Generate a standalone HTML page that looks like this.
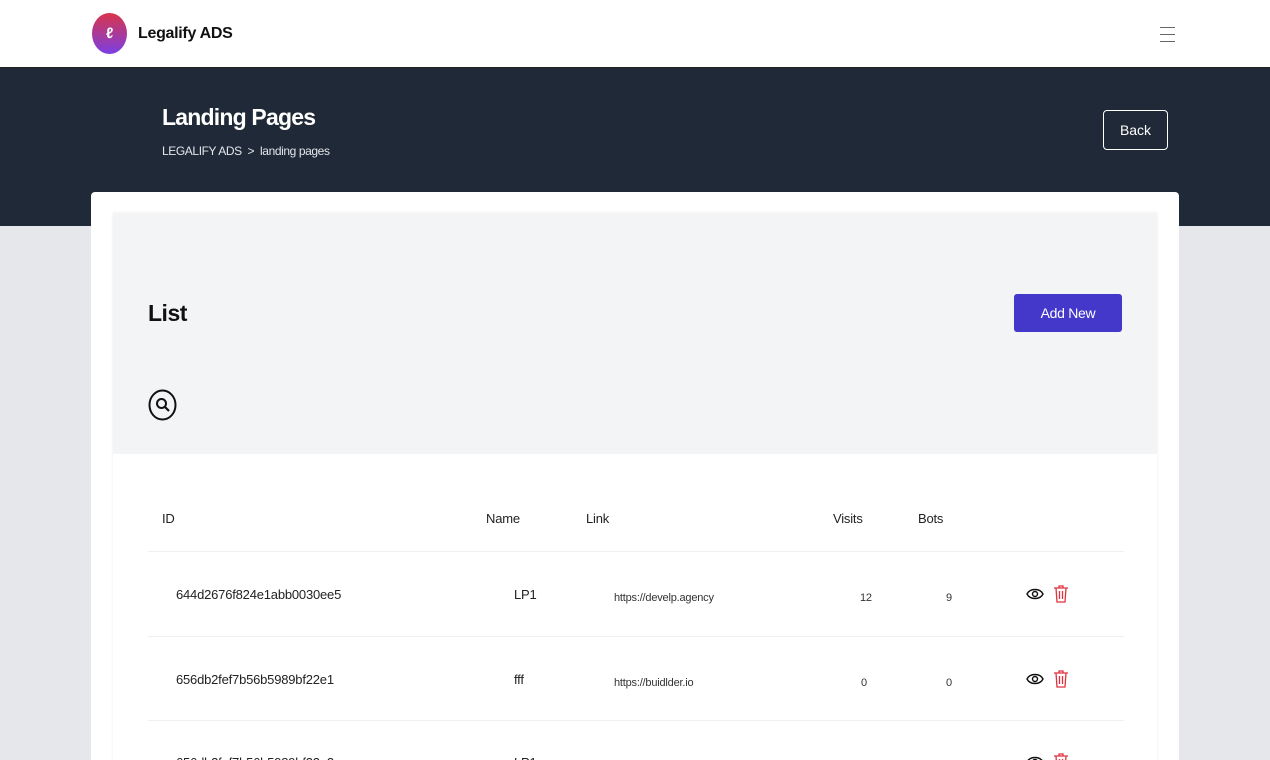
<!DOCTYPE html>
<html style="width:1270px;height:760px;overflow:hidden"><head><meta charset="utf-8"><style>
*{margin:0;padding:0;box-sizing:border-box}
body{width:1270px;height:760px;overflow:hidden;background:#e5e7eb;font-family:"Liberation Sans",sans-serif;position:relative;color:#111}
.top{position:absolute;left:0;top:0;width:1270px;height:68px;background:#fff;border-bottom:1px solid #222}
.logo{position:absolute;left:92px;top:13px;width:35px;height:41px;border-radius:50%;background:linear-gradient(180deg,#d9344a,#7b3fe4);color:#fff;font-weight:bold;font-size:15px;text-align:center;line-height:41px}
.brand{position:absolute;left:138px;top:25px;font-size:16px;font-weight:bold;color:#111;letter-spacing:-0.3px}
.ham{position:absolute;left:1160px;top:27px;width:15px}
.ham i{display:block;height:1px;background:#666;margin-bottom:6px}
.hero{position:absolute;left:0;top:68px;width:1270px;height:158px;background:#1f2937}
.h1{position:absolute;left:162px;top:104px;font-size:23px;font-weight:bold;color:#fff;letter-spacing:-0.8px}
.bc{position:absolute;left:162px;top:144px;font-size:12px;color:#e5e7eb;letter-spacing:-0.4px}
.back{position:absolute;left:1103px;top:110px;width:65px;height:40px;border:1px solid #fff;border-radius:4px;color:#fff;font-size:14px;text-align:center;line-height:38px}
.card{position:absolute;left:91px;top:192px;width:1088px;height:600px;background:#fff;border-radius:4px}
.inner{position:absolute;left:113px;top:213px;width:1044px;height:600px;background:#fff;box-shadow:0 0 3px rgba(0,0,0,.08)}
.head{position:absolute;left:113px;top:213px;width:1044px;height:241px;background:#f3f4f6}
.list{position:absolute;left:148px;top:300px;font-size:23px;font-weight:bold;letter-spacing:-0.5px}
.add{position:absolute;left:1014px;top:294px;width:108px;height:38px;background:#4338ca;border-radius:3px;color:#fff;font-size:14px;text-align:center;line-height:38px;letter-spacing:-0.3px}
.t{position:absolute;font-size:13px;color:#222;letter-spacing:-0.2px}
.s{font-size:11px;color:#333}
.line{position:absolute;left:148px;width:976px;height:1px;background:#f0f0f0}
</style></head><body>
<div class="top"><div class="logo">ℓ</div><div class="brand">Legalify ADS</div>
<div class="ham"><i></i><i></i><i></i></div></div>
<div class="hero"></div>
<div class="h1">Landing Pages</div>
<div class="bc">LEGALIFY ADS &nbsp;&gt;&nbsp; landing pages</div>
<div class="back">Back</div>
<div class="card"></div>
<div class="inner"></div>
<div class="head"></div>
<div class="list">List</div>
<div class="add">Add New</div>
<svg style="position:absolute;left:148px;top:389px" width="29" height="32" viewBox="0 0 29 32"><ellipse cx="14.5" cy="16" rx="13" ry="14.5" fill="none" stroke="#111" stroke-width="2"/><circle cx="13.5" cy="14.5" r="4.5" fill="none" stroke="#111" stroke-width="2"/><path d="M17 18l4 4" stroke="#111" stroke-width="2.2"/></svg>
<div class="t" style="left:162px;top:511px">ID</div>
<div class="t" style="left:486px;top:511px">Name</div>
<div class="t" style="left:586px;top:511px">Link</div>
<div class="t" style="left:833px;top:511px">Visits</div>
<div class="t" style="left:918px;top:511px">Bots</div>
<div class="line" style="top:551px"></div>
<div class="t" style="left:176px;top:587px">644d2676f824e1abb0030ee5</div>
<div class="t" style="left:514px;top:587px">LP1</div>
<div class="t s" style="left:614px;top:592px">https://develp.agency</div>
<div class="t s" style="left:860px;top:592px">12</div>
<div class="t s" style="left:946px;top:592px">9</div>
<div class="line" style="top:636px"></div>
<div class="t" style="left:176px;top:672px">656db2fef7b56b5989bf22e1</div>
<div class="t" style="left:514px;top:672px">fff</div>
<div class="t s" style="left:614px;top:677px">https://buidlder.io</div>
<div class="t s" style="left:861px;top:677px">0</div>
<div class="t s" style="left:946px;top:677px">0</div>
<div class="line" style="top:720px"></div>
<div class="t" style="left:176px;top:755px">656db2fef7b56b5989bf22e2</div>
<div class="t" style="left:514px;top:755px">LP1</div>
<svg width="0" height="0" style="position:absolute"><defs>
<g id="eye"><path d="M1 8c3-6 13-6 16 0c-3 6-13 6-16 0z" fill="none" stroke="#111" stroke-width="1.4"/><circle cx="9" cy="8" r="2.5" fill="none" stroke="#111" stroke-width="1.4"/></g>
<g id="bin" fill="none" stroke="#e0323c" stroke-width="1.3"><path d="M1 4h14M6 4V2h4v2M3 4l1 14h8l1-14M6.5 7v8M9.5 7v8"/></g></defs></svg>
<svg style="position:absolute;left:1026px;top:586px" width="18" height="16"><use href="#eye"/></svg>
<svg style="position:absolute;left:1053px;top:584px" width="16" height="20"><use href="#bin"/></svg>
<svg style="position:absolute;left:1026px;top:671px" width="18" height="16"><use href="#eye"/></svg>
<svg style="position:absolute;left:1053px;top:669px" width="16" height="20"><use href="#bin"/></svg>
<svg style="position:absolute;left:1026px;top:754px" width="18" height="16"><use href="#eye"/></svg>
<svg style="position:absolute;left:1053px;top:752px" width="16" height="20"><use href="#bin"/></svg>
</body></html>
